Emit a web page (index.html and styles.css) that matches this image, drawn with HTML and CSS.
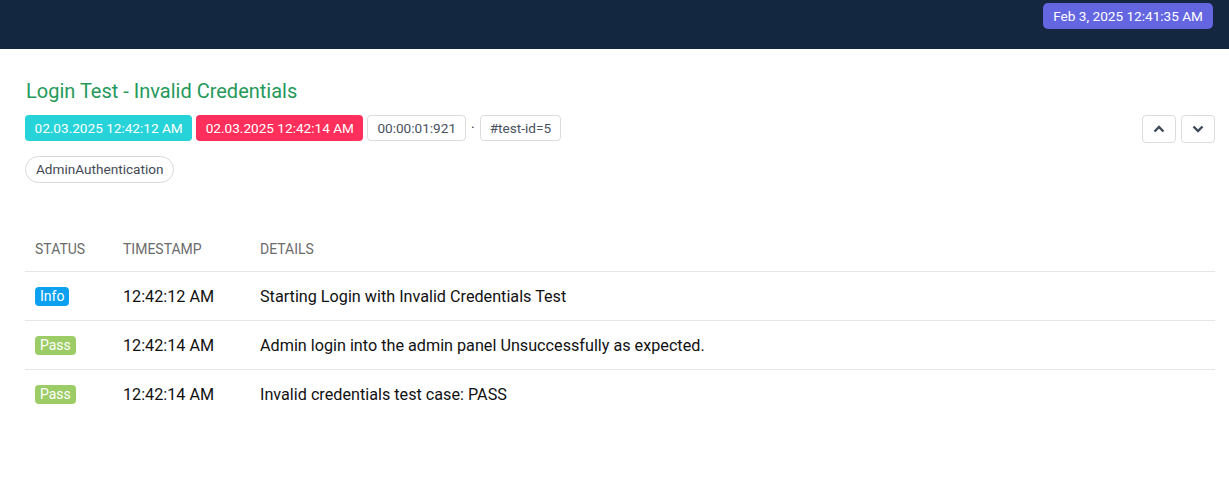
FILE: index.html
```html
<!DOCTYPE html>
<html>
<head>
<meta charset="utf-8">
<link rel="stylesheet" href="styles.css">
</head>
<body>
<header class="topbar">
  <span class="now">Feb 3, 2025 12:41:35 AM</span>
</header>
<main class="content">
  <h1 class="title">Login Test - Invalid Credentials</h1>
  <div class="meta">
    <div class="badges">
      <span class="badge start">02.03.2025 12:42:12 AM</span>
      <span class="badge end">02.03.2025 12:42:14 AM</span>
      <span class="badge outline">00:00:01:921</span>
      <span class="dot">·</span>
      <span class="badge outline">#test-id=5</span>
    </div>
    <div class="nav">
      <button class="navbtn" aria-label="up"><svg width="12" height="8" viewBox="0 0 12 8"><path d="M1.5 6.5 6 2l4.5 4.5" fill="none" stroke="#3f4a5a" stroke-width="2.4"/></svg></button>
      <button class="navbtn" aria-label="down"><svg width="12" height="8" viewBox="0 0 12 8"><path d="M1.5 1.5 6 6l4.5-4.5" fill="none" stroke="#3f4a5a" stroke-width="2.4"/></svg></button>
    </div>
  </div>
  <div class="tags"><span class="tag">AdminAuthentication</span></div>
  <table class="log">
    <thead>
      <tr><th class="c1">Status</th><th class="c2">Timestamp</th><th>Details</th></tr>
    </thead>
    <tbody>
      <tr><td><span class="st info">Info</span></td><td>12:42:12 AM</td><td>Starting Login with Invalid Credentials Test</td></tr>
      <tr><td><span class="st pass">Pass</span></td><td>12:42:14 AM</td><td>Admin login into the admin panel Unsuccessfully as expected.</td></tr>
      <tr><td><span class="st pass">Pass</span></td><td>12:42:14 AM</td><td>Invalid credentials test case: PASS</td></tr>
    </tbody>
  </table>
</main>
</body>
</html>
```
FILE: styles.css
```css
* { box-sizing: border-box; }
body {
  margin: 0;
  font-family: Roboto, "Liberation Sans", sans-serif;
  background: #fff;
  color: #111;
}
.topbar {
  height: 49px;
  background: #132741;
  display: flex;
  justify-content: flex-end;
  align-items: flex-start;
  padding: 3px 16px 0 0;
}
.now {
  background: #6366e0;
  color: #fff;
  font-size: 13.6px;
  height: 26px;
  line-height: 26px;
  padding: 0 10px;
  border-radius: 5px;
}
.content {
  padding: 29px 14px 0 25px;
}
.title {
  margin: 0 0 11px 1px;
  font-size: 20px;
  font-weight: 400;
  color: #24995a;
  line-height: 26px;
}
.meta {
  display: flex;
  justify-content: space-between;
  align-items: flex-start;
}
.badges {
  display: flex;
  align-items: center;
  gap: 4px;
}
.badge {
  font-size: 13.6px;
  height: 26px;
  line-height: 26px;
  padding: 0 9.5px;
  border-radius: 4px;
  color: #fff;
}
.badge.start { background: #25d3d8; }
.badge.end { background: #fe2f5a; }
.badge.outline {
  color: #4a5160;
  border: 1px solid #dcdcdc;
  line-height: 24px;
  padding: 0 9px;
  background: #fff;
}
.dot { color: #333; font-size: 14px; padding: 0 1px; }
.nav { display: flex; gap: 5px; }
.navbtn {
  width: 34px;
  height: 28px;
  border: 1px solid #dcdcdc;
  border-radius: 4px;
  background: #fff;
  display: flex;
  align-items: center;
  justify-content: center;
  padding: 0;
}
.tags { margin-top: 13px; }
.tag {
  display: inline-block;
  font-size: 13.6px;
  color: #444a55;
  border: 1px solid #d8d8d8;
  border-radius: 14px;
  height: 27px;
  line-height: 25px;
  padding: 0 10px 0 10px;
}
.log {
  margin-top: 49px;
  width: 100%;
  border-collapse: collapse;
}
.log th {
  text-align: left;
  font-weight: 400;
  font-size: 14px;
  line-height: 16px;
  color: #6b6b6b;
  text-transform: uppercase;
  padding: 9px 10px 14px;
  border-bottom: 1px solid #e6e6e6;
}
.log th.c1 { width: 88px; }
.log th.c2 { width: 137px; }
.log td {
  font-size: 16.2px;
  color: #111;
  height: 49px;
  padding: 0 10px;
  border-bottom: 1px solid #e6e6e6;
}
.log tr:last-child td { border-bottom: none; }
.st {
  display: inline-block;
  font-size: 14px;
  color: #fff;
  height: 19px;
  line-height: 19px;
  padding: 0 5px;
  border-radius: 4px;
}
.st.info { background: #0ba1f0; }
.st.pass { background: #9ccc65; }
```
